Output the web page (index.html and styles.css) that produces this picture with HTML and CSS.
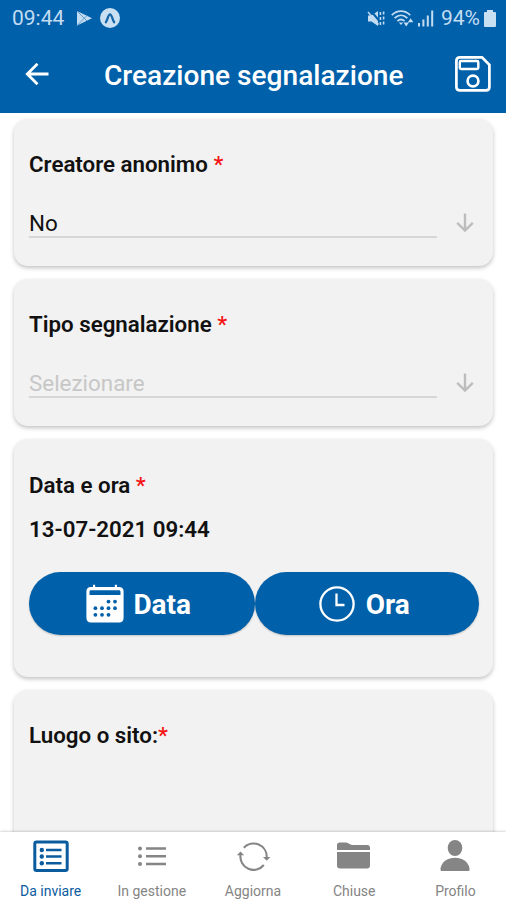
FILE: index.html
```html
<!DOCTYPE html>
<html lang="it">
<head>
    <meta charset="UTF-8">
    <meta name="viewport" content="width=device-width, initial-scale=1.0">
    <title>Creazione segnalazione</title>
    <link rel="stylesheet" href="styles.css">
</head>
<body>

    <header>
        <div class="status-bar">
            <span class="time">09:44</span>
            <svg class="play-icon" width="17" height="17" viewBox="0 0 17 17">
                <path d="M1 1L16 8.2L1 15.5Z" fill="#c3dcf2"/>
                <path d="M1 1L11 11M1 15.5L11 5.5" stroke="#5f9bcd" stroke-width="1" fill="none"/>
            </svg>
            <svg class="expo-icon" width="20" height="20" viewBox="0 0 20 20">
                <circle cx="10" cy="10" r="10" fill="#c9dff2"/>
                <path d="M5.9 14.2C7.6 11.5 8.2 6.4 10 6.4S12.4 11.5 14.1 14.2" fill="none" stroke="#1767a8" stroke-width="2.3" stroke-linecap="round"/>
            </svg>
            <div class="status-right">
                <svg width="18" height="17" viewBox="0 0 18 17" fill="none" stroke="#c3dcf2">
                    <path d="M1 5.5H4.5L11 1V16L4.5 11.5H1Z" fill="#c3dcf2" stroke="none"/>
                    <path d="M4 1L12 10.5" stroke="#0060a9" stroke-width="2"/>
                    <path d="M1 2L11.5 14.5" stroke-width="1.4"/>
                    <path d="M13.4 2V5M13.4 7V10M13.4 12V15M16.6 1.5V4.5M16.6 6.5V9.5M16.6 11.5V14.5" stroke-width="1.6"/>
                </svg>
                <svg class="wifi-icon" width="23" height="17" viewBox="0 0 23 17" fill="none" stroke="#c3dcf2" stroke-width="1.8">
                    <path d="M0.8 5.2C6 -0.2 14 -0.2 19.2 5.2M3.6 8.2C7.5 4.4 12.5 4.4 16.4 8.2M6.4 11.2C8.8 9 11.2 9 13.6 11.2"/>
                    <path d="M7.8 12.4L10 15L12.2 12.4Z" fill="#c3dcf2" stroke="none"/>
                    <path d="M12.5 12.5H18L15.2 16.5ZM16.8 12.2L19.6 8.2L22.4 12.2Z" fill="#c3dcf2" stroke="none"/>
                </svg>
                <svg class="signal-icon" width="16" height="17" viewBox="0 0 16 17" fill="#c3dcf2">
                    <path d="M0 13H2V16.5H0ZM4.4 9.5H6.4V16.5H4.4ZM8.8 5.5H10.8V16.5H8.8ZM13.2 0.5H15.2V16.5H13.2Z"/>
                </svg>
                <span class="battery">94%</span>
                <svg width="12" height="17" viewBox="0 0 12 17" fill="#c9dff2">
                    <path d="M3 0H9V2H11Q12 2 12 3V16Q12 17 11 17H1Q0 17 0 16V3Q0 2 1 2H3Z"/>
                </svg>
            </div>
        </div>
        <div class="title-bar">
            <svg class="back" width="24" height="24" viewBox="0 0 24 24" fill="none" stroke="#fff" stroke-width="2.8">
                <path d="M23.5 11H3M12.5 0.8L2.3 11L12.5 21.2"/>
            </svg>
            <h1>Creazione segnalazione</h1>
            <svg class="save" width="36" height="36" viewBox="0 0 36 36" fill="none" stroke="#fff" stroke-width="2.7">
                <path d="M5 1.4H27L34.4 8.8V31Q34.4 34.4 31 34.4H5Q1.4 34.4 1.4 31V5Q1.4 1.4 5 1.4Z"/>
                <rect x="4.8" y="5" width="18.5" height="8" rx="1.2" stroke-width="2.4"/>
                <circle cx="18" cy="25" r="5.4"/>
            </svg>
        </div>
    </header>

    <main class="form">
        <section class="card">
            <h2>Creatore anonimo <span class="required">*</span></h2>
            <div class="select">
                <div class="value">No</div>
                <svg class="arrow" width="18" height="20" viewBox="0 0 18 20" fill="none" stroke="#bdbdbd" stroke-width="2.4">
                    <path d="M9 0.5V17.5M1.2 9.8L9 17.6L16.8 9.8"/>
                </svg>
            </div>
        </section>

        <section class="card">
            <h2>Tipo segnalazione <span class="required">*</span></h2>
            <div class="select">
                <div class="value placeholder">Selezionare</div>
                <svg class="arrow" width="18" height="20" viewBox="0 0 18 20" fill="none" stroke="#bdbdbd" stroke-width="2.4">
                    <path d="M9 0.5V17.5M1.2 9.8L9 17.6L16.8 9.8"/>
                </svg>
            </div>
        </section>

        <section class="card card-date">
            <h2>Data e ora <span class="required">*</span></h2>
            <p class="date">13-07-2021 09:44</p>
            <div class="buttons">
                <button class="btn">
                    <svg width="38" height="39" viewBox="0 0 38 39">
                        <path d="M5 3H7V1.2Q8 -0.4 9.2 1.2V3H28.8V1.2Q30 -0.4 31 1.2V3H33Q37.6 3 37.6 7.5V33.5Q37.6 38.5 33 38.5H5Q0.4 38.5 0.4 33.5V7.5Q0.4 3 5 3Z" fill="#fff"/>
                        <path d="M4.5 6.3H33.5Q34.5 6.3 34.5 8V11H3.5V8Q3.5 6.3 4.5 6.3Z" fill="#0060a9"/>
                        <g fill="#0060a9">
                            <circle cx="22.5" cy="17.6" r="1.9"/><circle cx="29" cy="17.6" r="1.9"/>
                            <circle cx="9.4" cy="24.2" r="1.9"/><circle cx="16" cy="24.2" r="1.9"/><circle cx="22.5" cy="24.2" r="1.9"/><circle cx="29" cy="24.2" r="1.9"/>
                            <circle cx="9.4" cy="30.8" r="1.9"/><circle cx="16" cy="30.8" r="1.9"/><circle cx="22.5" cy="30.8" r="1.9"/>
                        </g>
                    </svg>
                    <span>Data</span>
                </button>
                <button class="btn btn-time">
                    <svg width="36" height="36" viewBox="0 0 36 36" fill="none" stroke="#fff" stroke-width="2.3">
                        <circle cx="18" cy="18" r="16.6"/>
                        <path d="M17.5 7.5V19H25.5"/>
                    </svg>
                    <span>Ora</span>
                </button>
            </div>
        </section>

        <section class="card card-place">
            <h2>Luogo o sito:<span class="required">*</span></h2>
        </section>
    </main>

    <nav class="tabs">
        <a class="tab active">
            <svg width="36" height="34" viewBox="0 0 36 34" fill="none" stroke="currentColor">
                <rect x="1.8" y="3" width="32.4" height="28.6" rx="1.8" stroke-width="3"/>
                <path d="M13 11H28.5M13 17.5H28.5M13 24.2H28.5" stroke-width="2.6"/>
                <g fill="currentColor" stroke="none"><circle cx="8.8" cy="11" r="2.2"/><circle cx="8.8" cy="17.5" r="2.2"/><circle cx="8.8" cy="24.2" r="2.2"/></g>
            </svg>
            <span>Da inviare</span>
        </a>
        <a class="tab">
            <svg width="36" height="34" viewBox="0 0 36 34" fill="none" stroke="currentColor">
                <path d="M12 9.5H32M12 17.3H32M12 25H32" stroke-width="2.4"/>
                <g fill="currentColor" stroke="none"><circle cx="6" cy="9.5" r="2"/><circle cx="6" cy="17.3" r="2"/><circle cx="6" cy="25" r="2"/></g>
            </svg>
            <span>In gestione</span>
        </a>
        <a class="tab">
            <svg width="36" height="34" viewBox="0 0 36 34" fill="none" stroke="currentColor" stroke-width="2.1">
                <path d="M8.8 8.8A13.2 13.2 0 0 1 31.7 18.5M28.8 26A13.2 13.2 0 0 1 5.5 16"/>
                <path d="M28 18H35.4L31.7 21.8ZM1.8 16.3H9.2L5.5 12.4Z" fill="currentColor" stroke="none"/>
            </svg>
            <span>Aggiorna</span>
        </a>
        <a class="tab">
            <svg width="36" height="34" viewBox="0 0 36 34" fill="currentColor">
                <path d="M1 11V6Q1 3.5 3.5 3.5H10Q12 3.5 13.5 5Q15 6 17 6H31Q34 6 34 9V11Z"/>
                <path d="M1 13H34V26.5Q34 29.5 31 29.5H4Q1 29.5 1 26.5Z"/>
            </svg>
            <span>Chiuse</span>
        </a>
        <a class="tab">
            <svg width="36" height="34" viewBox="0 0 36 34" fill="currentColor">
                <ellipse cx="18" cy="9" rx="7.3" ry="8"/>
                <path d="M4 32Q3.5 32 3.5 29.5C4.5 22.5 11 18.7 18 18.7S31.5 22.5 32.5 29.5Q32.5 32 32 32Z"/>
            </svg>
            <span>Profilo</span>
        </a>
    </nav>

</body>
</html>
```
FILE: styles.css
```css
* {
    box-sizing: border-box;
    margin: 0;
    padding: 0;
}

body {
    font-family: Roboto, sans-serif;
    background-color: #fff;
    color: #111;
    display: flex;
    flex-direction: column;
    height: 100vh;
    overflow: hidden;
}

header {
    flex: none;
    height: 113px;
    background-color: #0060a9;
}

.status-bar {
    display: flex;
    align-items: center;
    height: 36px;
    padding: 0 10px 0 12px;
    color: #c3dcf2;
    font-size: 21px;
}

.play-icon {
    margin-left: 12px;
}

.expo-icon {
    margin-left: 7px;
}

.status-right {
    display: flex;
    align-items: center;
    margin-left: auto;
}

.wifi-icon {
    margin-left: 6px;
}

.signal-icon {
    margin-left: 4px;
}

.battery {
    margin: 0 4px 0 7px;
}

.title-bar {
    display: flex;
    align-items: center;
    height: 77px;
    padding: 0 15px 0 25px;
}

.title-bar h1 {
    margin-left: 55px;
    padding-top: 3px;
    font-size: 28.1px;
    font-weight: 500;
    line-height: 32px;
    color: #fff;
    white-space: nowrap;
}

.title-bar .save {
    margin-left: auto;
    margin-top: -1px;
}

.form {
    flex: 1;
    min-height: 0;
    display: flex;
    flex-direction: column;
    gap: 13px;
    padding: 6px 13px 0 14px;
    overflow: hidden;
}

.card {
    flex: none;
    height: 147px;
    padding: 32px 14px 0 15px;
    background-color: #f2f2f2;
    border-radius: 14px;
    box-shadow: 0 2px 4px rgba(0, 0, 0, 0.24);
}

.card h2,
.date {
    font-size: 22.3px;
    font-weight: 600;
    line-height: 26px;
    white-space: nowrap;
}

.required {
    color: #f41414;
    font-weight: 500;
}

.select {
    display: flex;
    align-items: center;
    gap: 19px;
    margin-top: 30px;
}

.value {
    width: 408px;
    height: 31px;
    border-bottom: 2px solid #d6d6d6;
    font-size: 22.4px;
    line-height: 33px;
}

.placeholder {
    color: #c7c7c7;
}

.card-date {
    height: 238px;
    padding-top: 33px;
}

.date {
    margin-top: 18px;
}

.buttons {
    display: flex;
    margin-top: 30px;
}

.btn {
    flex: 1;
    display: flex;
    align-items: center;
    justify-content: center;
    gap: 9px;
    height: 63px;
    padding-right: 6px;
    border: none;
    border-radius: 32px;
    background-color: #0060a9;
    box-shadow: 0 1px 2px rgba(0, 0, 0, 0.2);
    color: #fff;
    font-family: inherit;
    font-size: 28px;
    font-weight: 700;
}

.btn span {
    padding-top: 2px;
}

.btn-time {
    gap: 11px;
    padding-right: 5px;
}

.card-place {
    height: 200px;
}

.tabs {
    flex: none;
    display: flex;
    position: relative;
    height: 68px;
    background-color: #fff;
    box-shadow: 0 -1px 2px rgba(0, 0, 0, 0.16);
}

.tab {
    flex: 1;
    display: flex;
    flex-direction: column;
    align-items: center;
    padding-top: 7px;
    color: #858585;
    font-size: 14px;
    line-height: 16px;
    white-space: nowrap;
}

.tab span {
    margin-top: 10px;
}

.tab.active {
    color: #0b5c9e;
}
```
